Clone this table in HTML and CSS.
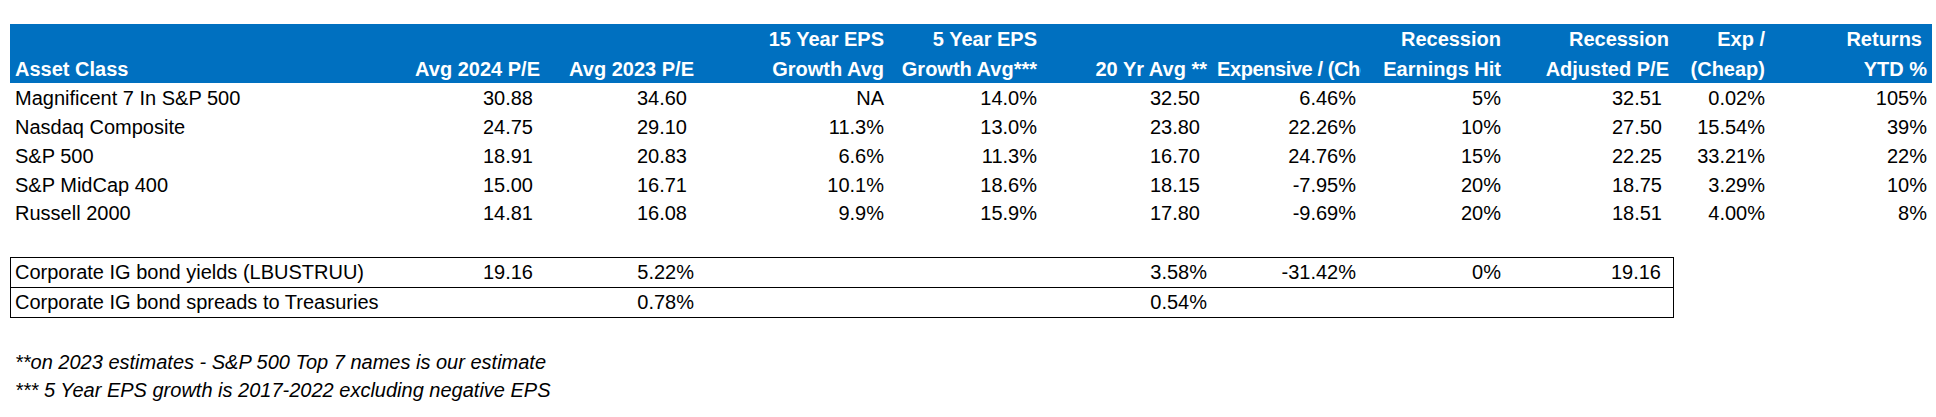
FILE: index.html
```html
<!DOCTYPE html>
<html lang="en">
<head>
<meta charset="utf-8">
<title>Valuation Table</title>
<link rel="stylesheet" href="styles.css">
</head>
<body>
<div class="sheet">
  <div class="head cols">
    <div class="hc lab"><div class="hl"></div><div class="hl">Asset Class</div></div>
    <div class="hc"><div class="hl"></div><div class="hl">Avg 2024 P/E</div></div>
    <div class="hc"><div class="hl"></div><div class="hl">Avg 2023 P/E</div></div>
    <div class="hc"><div class="hl">15 Year EPS</div><div class="hl">Growth Avg</div></div>
    <div class="hc"><div class="hl">5 Year EPS</div><div class="hl">Growth Avg***</div></div>
    <div class="hc"><div class="hl"></div><div class="hl">20 Yr Avg **</div></div>
    <div class="hc clip"><div class="hl"></div><div class="hl">Expensive / (Che</div></div>
    <div class="hc"><div class="hl">Recession</div><div class="hl">Earnings Hit</div></div>
    <div class="hc"><div class="hl">Recession</div><div class="hl">Adjusted P/E</div></div>
    <div class="hc"><div class="hl">Exp /</div><div class="hl">(Cheap)</div></div>
    <div class="hc"><div class="hl trail">Returns</div><div class="hl">YTD %</div></div>
  </div>

  <div class="row cols">
    <div class="c lab">Magnificent 7 In S&amp;P 500</div>
    <div class="c num">30.88</div><div class="c num">34.60</div>
    <div class="c">NA</div><div class="c">14.0%</div>
    <div class="c num">32.50</div><div class="c">6.46%</div>
    <div class="c">5%</div><div class="c num">32.51</div>
    <div class="c">0.02%</div><div class="c">105%</div>
  </div>
  <div class="row cols">
    <div class="c lab">Nasdaq Composite</div>
    <div class="c num">24.75</div><div class="c num">29.10</div>
    <div class="c">11.3%</div><div class="c">13.0%</div>
    <div class="c num">23.80</div><div class="c">22.26%</div>
    <div class="c">10%</div><div class="c num">27.50</div>
    <div class="c">15.54%</div><div class="c">39%</div>
  </div>
  <div class="row cols">
    <div class="c lab">S&amp;P 500</div>
    <div class="c num">18.91</div><div class="c num">20.83</div>
    <div class="c">6.6%</div><div class="c">11.3%</div>
    <div class="c num">16.70</div><div class="c">24.76%</div>
    <div class="c">15%</div><div class="c num">22.25</div>
    <div class="c">33.21%</div><div class="c">22%</div>
  </div>
  <div class="row cols">
    <div class="c lab">S&amp;P MidCap 400</div>
    <div class="c num">15.00</div><div class="c num">16.71</div>
    <div class="c">10.1%</div><div class="c">18.6%</div>
    <div class="c num">18.15</div><div class="c">-7.95%</div>
    <div class="c">20%</div><div class="c num">18.75</div>
    <div class="c">3.29%</div><div class="c">10%</div>
  </div>
  <div class="row cols">
    <div class="c lab">Russell 2000</div>
    <div class="c num">14.81</div><div class="c num">16.08</div>
    <div class="c">9.9%</div><div class="c">15.9%</div>
    <div class="c num">17.80</div><div class="c">-9.69%</div>
    <div class="c">20%</div><div class="c num">18.51</div>
    <div class="c">4.00%</div><div class="c">8%</div>
  </div>

  <div class="box">
    <div class="brow bcols sep">
      <div class="c lab">Corporate IG bond yields (LBUSTRUU)</div>
      <div class="c num">19.16</div><div class="c">5.22%</div>
      <div class="c"></div><div class="c"></div>
      <div class="c">3.58%</div><div class="c">-31.42%</div>
      <div class="c">0%</div><div class="c num">19.16</div>
    </div>
    <div class="brow bcols">
      <div class="c lab">Corporate IG bond spreads to Treasuries</div>
      <div class="c num"></div><div class="c">0.78%</div>
      <div class="c"></div><div class="c"></div>
      <div class="c">0.54%</div><div class="c"></div>
      <div class="c"></div><div class="c num"></div>
    </div>
  </div>

  <div class="notes">
    <p>**on 2023 estimates - S&amp;P 500 Top 7 names is our estimate</p>
    <p>*** 5 Year EPS growth is 2017-2022 excluding negative EPS</p>
  </div>
</div>
</body>
</html>
```

FILE: styles.css
```css
html, body {
  margin: 0;
  padding: 0;
  background: #ffffff;
}

body {
  font-family: "Liberation Sans", Arial, sans-serif;
  font-size: 20px;
  color: #000000;
}

.sheet {
  padding: 24px 0 0 10px;
  width: 1922px;
}

.cols {
  display: grid;
  grid-template-columns: 380px 155px 154px 190px 153px 170px 149px 145px 168px 96px 162px;
}

.bcols {
  display: grid;
  grid-template-columns: 379px 155px 154px 190px 153px 170px 149px 145px 167px;
}

/* header band */
.head {
  background: #0070c0;
  color: #ffffff;
  font-weight: bold;
}

.hc {
  display: flex;
  flex-direction: column;
  text-align: right;
  padding-right: 5px;
  white-space: nowrap;
  min-width: 0;
}

.hc.lab {
  text-align: left;
  padding-left: 5px;
  padding-right: 0;
}

.hc.clip {
  text-align: left;
  padding-left: 5px;
  padding-right: 0;
  overflow: hidden;
  letter-spacing: -0.4px;
}

.hl {
  height: 29.5px;
  box-sizing: border-box;
  padding-top: 2px;
  line-height: 27.5px;
}

.hl.trail {
  padding-right: 5px;
}

/* data rows */
.row {
  height: 28.75px;
  box-sizing: border-box;
  padding-top: 2.4px;
  line-height: 26.35px;
}

.c {
  text-align: right;
  padding-right: 5px;
  white-space: nowrap;
  min-width: 0;
}

.c.num {
  padding-right: 12px;
}

.c.lab {
  text-align: left;
  padding-left: 5px;
  padding-right: 0;
}

/* bond box */
.box {
  margin-top: 30px;
  width: 1664px;
  border: 1px solid #000000;
  box-sizing: border-box;
}

.brow {
  height: 27.5px;
  box-sizing: content-box;
  padding-top: 1.5px;
  line-height: 26px;
}

.brow .c {
  height: 26px;
}

.brow .c.lab {
  padding-left: 4px;
}

.brow.sep {
  border-bottom: 1px solid #000000;
}

/* footnotes */
.notes {
  margin-top: 30px;
  padding-left: 5px;
  font-style: italic;
}

.notes p {
  margin: 0;
  line-height: 28.3px;
}
```
